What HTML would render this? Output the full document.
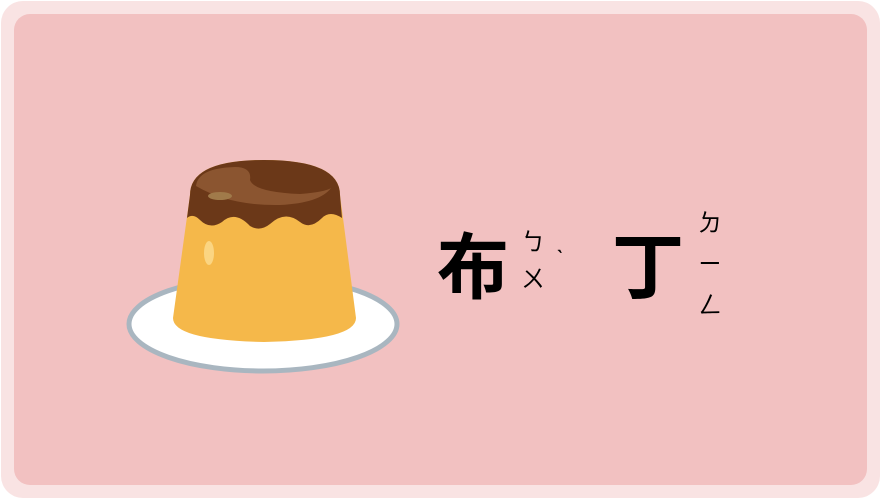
<html><body style="margin:0;background:#fff;width:881px;height:499px;overflow:hidden;font-family:'Liberation Sans','Noto Sans CJK TC',sans-serif">
<div style="position:absolute;left:1px;top:1px;width:879px;height:497px;border-radius:22px;background:#f9e3e3"></div>
<div style="position:absolute;left:14px;top:14px;width:853px;height:471px;border-radius:16px;background:#f2c1c1"></div>
<svg style="position:absolute;left:0;top:0" width="881" height="499">
<ellipse cx="263" cy="324" rx="134" ry="47" fill="#fff" stroke="#a9b6c0" stroke-width="5"/>
<path d="M190,195 Q190,160 264,160 Q340,160 340,195 L356,318 Q356,340 264,342 Q173,340 173,318 Z" fill="#f5b84a"/>
<path d="M190,195 Q190,160 264,160 Q340,160 340,195 L342,218 Q330,210 322,218 Q310,230 300,222 Q285,210 270,224 Q260,232 250,226 Q235,210 222,222 Q210,230 200,220 Q193,213 187,218 Z" fill="#6b3818"/>
<path d="M196,186 Q198,168 235,167 Q252,167 250,180 Q254,192 300,194 Q325,192 331,188 Q320,203 280,205 Q230,206 196,186Z" fill="#8b5530"/>
<ellipse cx="220" cy="196" rx="12" ry="4" fill="#a07a4a"/>
<ellipse cx="209" cy="253" rx="5" ry="12" fill="#fbd582"/>
</svg>
<div style="position:absolute;left:437px;top:226px;font-size:72px;font-weight:bold;line-height:86px">布</div>
<div style="position:absolute;left:521px;top:224px;font-size:24px;line-height:37px">ㄅ<br>ㄨ</div>
<div style="position:absolute;left:556px;top:246px;font-size:24px">ˋ</div>
<div style="position:absolute;left:612px;top:226px;font-size:72px;font-weight:bold;line-height:86px">丁</div>
<div style="position:absolute;left:698px;top:203px;font-size:24px;line-height:41px">ㄉ<br>ㄧ<br>ㄥ</div>
</body></html>
